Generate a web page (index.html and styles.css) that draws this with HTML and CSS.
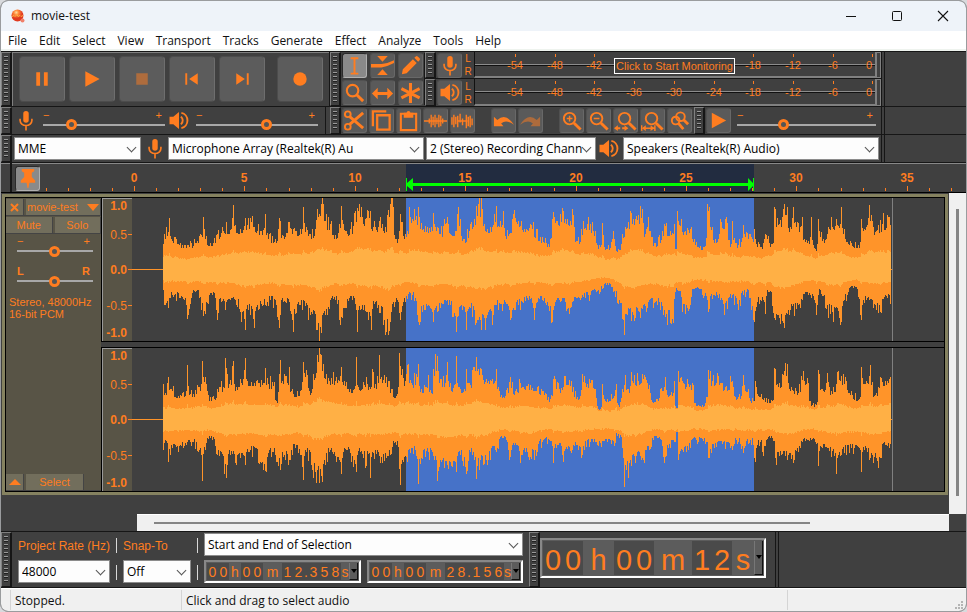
FILE: index.html
```html
<!DOCTYPE html>
<html lang="en">
<head>
<meta charset="utf-8">
<title>movie-test</title>
<link rel="stylesheet" href="styles.css">
</head>
<body>
<svg class="symbols" aria-hidden="true">
  <symbol id="mic" viewBox="0 0 16 22"><rect x="5" y="0" width="6" height="13" rx="3" fill="currentColor"/><path d="M1.500 8.500v2a6.500 5.500 0 0 0 13 0v-2M8 16v5.500" fill="none" stroke="currentColor" stroke-width="1.800"/></symbol>
  <symbol id="speaker" viewBox="0 0 20 20"><path d="M0 6h4l6-5v18l-6-5H0z" fill="currentColor"/><path d="M12 6q4 4 0 8M12.500 2a8.200 8.200 0 0 1 0 16" fill="none" stroke="currentColor" stroke-width="2"/></symbol>
  <symbol id="glass" viewBox="0 0 24 24"><circle cx="9.500" cy="9.500" r="5.500" fill="none" stroke="currentColor" stroke-width="2"/><path d="M13.500 13.500l7 7" stroke="currentColor" stroke-width="3"/></symbol>
</svg>

<div class="window">
  <header class="titlebar">
    <svg class="logo" viewBox="0 0 14 14"><defs><radialGradient id="lg" cx="40%" cy="25%"><stop offset="0" stop-color="#ffe0a0"/><stop offset="0.400" stop-color="#ff8a3a"/><stop offset="1" stop-color="#e03a20"/></radialGradient></defs><circle cx="6.500" cy="6.500" r="6" fill="url(#lg)"/><path d="M1 7.500l2-1 1 1 2-2 1 2 2-1 1 1 2-1" fill="none" stroke="#ffb040" stroke-width="1"/><circle cx="11.500" cy="11.500" r="2" fill="#f0806a"/></svg>
    <h1>movie-test</h1>
    <div class="caption">
      <button aria-label="Minimize"><svg width="12" height="12"><path d="M1 6.500h10" stroke="#111"/></svg></button>
      <button aria-label="Maximize"><svg width="12" height="12"><rect x="1.500" y="1.500" width="9" height="9" rx="1" fill="none" stroke="#111"/></svg></button>
      <button aria-label="Close"><svg width="12" height="12"><path d="M1 1l10 10M11 1L1 11" stroke="#111" stroke-width="1.100"/></svg></button>
    </div>
  </header>
  <nav class="menu">
    <button>File</button><button>Edit</button><button>Select</button><button>View</button><button>Transport</button><button>Tracks</button><button>Generate</button><button>Effect</button><button>Analyze</button><button>Tools</button><button>Help</button>
  </nav>

  <section class="dock">
    <div class="dock-row row-tall">
      <div class="bars">
        <div class="bar transport">
          <i class="grip"></i>
          <div class="big-buttons">
            <button aria-label="Pause"><svg viewBox="0 0 46 46"><path d="M17 16h4v14h-4zM25 16h4v14h-4z"/></svg></button>
            <button aria-label="Play"><svg viewBox="0 0 46 46"><path d="M16 15l15 8-15 8z"/></svg></button>
            <button aria-label="Stop" class="off"><svg viewBox="0 0 46 46"><path d="M17 17h12v12H17z"/></svg></button>
            <button aria-label="Skip to Start"><svg viewBox="0 0 46 46"><path d="M16 17h2v12h-2zM29 17v12l-9-6z"/></svg></button>
            <button aria-label="Skip to End"><svg viewBox="0 0 46 46"><path d="M28 17h2v12h-2zM17 17v12l9-6z"/></svg></button>
            <button aria-label="Record" class="record"><svg viewBox="0 0 46 46"><circle cx="23" cy="23" r="7"/></svg></button>
          </div>
        </div>
        <div class="bar">
          <i class="grip"></i>
          <div class="tool-grid">
            <button class="tool on" aria-label="Selection Tool"><svg viewBox="0 0 24 24"><path d="M8 4.500h8M8 20.500h8M12 4v17" fill="none" stroke="currentColor" stroke-width="2"/></svg></button>
            <button class="tool" aria-label="Envelope Tool"><svg viewBox="0 0 24 24"><path d="M6.500 2h11L12 8zM6.500 22h11L12 16zM0 10.500h11l6-1 7-3v3l-7 3-6 1.500H0z"/></svg></button>
            <button class="tool" aria-label="Draw Tool"><svg viewBox="0 0 24 24"><path d="M3 21l1-5L14.500 5.500l4 4L8 20zM16 4l1.500-1.500q1-1 2 0l2 2q1 1 0 2L20 8z"/></svg></button>
            <button class="tool" aria-label="Zoom Tool"><svg viewBox="0 0 24 24"><circle cx="10" cy="10" r="6" fill="none" stroke="currentColor" stroke-width="2.200"/><path d="M14 14l7 7" stroke="currentColor" stroke-width="3"/></svg></button>
            <button class="tool" aria-label="Time Shift Tool"><svg viewBox="0 0 24 24"><path d="M1 13l6-6v4.500h10V7l6 6-6 6v-4.500H7V19z"/></svg></button>
            <button class="tool" aria-label="Multi-Tool"><svg viewBox="0 0 24 24"><path d="M12 2v21M2.500 8l19 9.500M21.500 8l-19 9.500" fill="none" stroke="currentColor" stroke-width="3.200"/></svg></button>
          </div>
        </div>
        <div class="meters">
          <div class="meter">
            <i class="grip"></i>
            <button class="tool" aria-label="Record Meter"><svg><use href="#mic" x="4" y="2" width="16" height="20"/></svg></button>
            <div class="lr"><span>L</span><span>R</span></div>
            <div class="scale">
              <svg class="meter-scale" data-skip="true"></svg>
              <button class="monitor">Click to Start Monitoring</button>
            </div>
            <i class="clip"></i>
          </div>
          <div class="meter">
            <i class="grip"></i>
            <button class="tool" aria-label="Playback Meter"><svg><use href="#speaker" x="2" y="2" width="20" height="19"/></svg></button>
            <div class="lr"><span>L</span><span>R</span></div>
            <div class="scale"><svg class="meter-scale"></svg></div>
            <i class="clip"></i>
          </div>
        </div>
      </div>
      <i class="dock-end"></i>
    </div>

    <div class="dock-row">
      <div class="bars">
        <div class="bar mixer">
          <i class="grip"></i>
          <svg class="glyph" aria-hidden="true"><use href="#mic" x="3" y="1" width="16" height="20"/></svg>
          <div class="slider"><span><b>−</b><b>+</b></span><input type="range" value="21" aria-label="Recording Volume"></div>
          <svg class="glyph" aria-hidden="true"><use href="#speaker" x="1" y="1" width="20" height="19"/></svg>
          <div class="slider"><span><b>−</b><b>+</b></span><input type="range" value="59" aria-label="Playback Volume"></div>
        </div>
        <div class="bar edit">
          <i class="grip"></i>
          <div class="tools">
            <button class="tool" aria-label="Cut"><svg viewBox="0 0 24 24"><g fill="none" stroke="currentColor" stroke-width="2"><circle cx="5" cy="5.500" r="3"/><circle cx="5" cy="18.500" r="3"/><path d="M7 8l14 12M7 16L21 4" stroke-width="3"/></g></svg></button>
            <button class="tool" aria-label="Copy"><svg viewBox="0 0 24 24"><path d="M3 18V2.500h14M7.500 6.500h13v15h-13z" fill="none" stroke="currentColor" stroke-width="2.400"/></svg></button>
            <button class="tool" aria-label="Paste"><svg viewBox="0 0 24 24"><path d="M4 5h16v17H4z" fill="none" stroke="currentColor" stroke-width="2.200"/><path d="M7 4h3a2 2 0 0 1 4 0h3v5H7z"/></svg></button>
            <button class="tool" aria-label="Trim"><svg viewBox="0 0 24 24"><path d="M0 12.500h24M5.500 10v5M7.500 6v13M9.500 8v9M11.500 6v13M13.500 9v7M15.500 6v13M17.500 7v11M19.500 10v5" fill="none" stroke="currentColor" stroke-width="1.400"/></svg></button>
            <button class="tool" aria-label="Silence"><svg viewBox="0 0 24 24"><path d="M1 8.500v8M3 6v13M5 8v8M7 7v12M7 12.500h10M9.500 5v9M16 6v14M18 8v10M20 7v12M22 10v7M12 10v7" fill="none" stroke="currentColor" stroke-width="1.500"/></svg></button>
            <button class="tool gap" aria-label="Undo"><svg viewBox="0 0 24 24"><path d="M2 18V8l3.500 3.500q9-8 17.500 5-8-6-13.500-1.500L12 18z"/></svg></button>
            <button class="tool off" aria-label="Redo"><svg viewBox="0 0 24 24"><path d="M22 18V8l-3.500 3.500q-9-8-17.500 5 8-6 13.500-1.500L12 18z"/></svg></button>
            <button class="tool gap" aria-label="Zoom In"><svg viewBox="0 0 24 24"><circle cx="10" cy="10" r="6" fill="none" stroke="currentColor" stroke-width="2"/><path d="M14.500 14.500l7 7" stroke="currentColor" stroke-width="3"/><path d="M7 10h6M10 7v6" stroke="currentColor" stroke-width="1.500"/></svg></button>
            <button class="tool" aria-label="Zoom Out"><svg viewBox="0 0 24 24"><circle cx="10" cy="10" r="6" fill="none" stroke="currentColor" stroke-width="2"/><path d="M14.500 14.500l7 7" stroke="currentColor" stroke-width="3"/><path d="M7 10h6" stroke="currentColor" stroke-width="1.500"/></svg></button>
            <button class="tool" aria-label="Fit Selection"><svg viewBox="0 0 24 24"><circle cx="11" cy="10" r="6" fill="none" stroke="currentColor" stroke-width="2"/><path d="M15.500 14.500l7 7" stroke="currentColor" stroke-width="3"/><path d="M0 20l4-3v2h2.500v2H4v2zM15 20l-4-3v2H8.500v2H11v2z"/></svg></button>
            <button class="tool" aria-label="Fit Project"><svg viewBox="0 0 24 24"><circle cx="11" cy="10" r="6" fill="none" stroke="currentColor" stroke-width="2"/><path d="M15.500 14.500l7 7" stroke="currentColor" stroke-width="3"/><path d="M0.700 17v6M14.500 17v6M2 20h12" stroke="currentColor" stroke-width="1.500"/><path d="M1 20l4-3v6zM14 20l-4-3v6z"/></svg></button>
            <button class="tool" aria-label="Zoom Toggle"><svg viewBox="0 0 24 24"><g fill="none" stroke="currentColor" stroke-width="2"><circle cx="13" cy="8" r="4.500"/><circle cx="8" cy="12" r="4"/><path d="M16 11l5 5M11 15l5 6" stroke-width="3"/></g></svg></button>
          </div>
        </div>
        <div class="bar speed">
          <i class="grip"></i>
          <button class="tool" aria-label="Play at Speed"><svg viewBox="0 0 24 24"><path d="M5 4l15 8-15 8z"/></svg></button>
          <div class="slider"><span><b>−</b><b>+</b></span><input type="range" value="32" aria-label="Playback Speed"></div>
        </div>
      </div>
      <i class="dock-end"></i>
    </div>

    <div class="dock-row">
      <div class="bars device">
        <i class="grip"></i>
        <label class="pick host"><select aria-label="Audio Host"><option>MME</option></select></label>
        <svg class="glyph" aria-hidden="true"><use href="#mic" x="4" y="1" width="16" height="20"/></svg>
        <label class="pick"><select aria-label="Recording Device"><option>Microphone Array (Realtek(R) Au</option></select></label>
        <label class="pick chan"><select aria-label="Recording Channels"><option>2 (Stereo) Recording Chann</option></select></label>
        <svg class="glyph" aria-hidden="true"><use href="#speaker" x="1" y="1" width="20" height="19"/></svg>
        <label class="pick"><select aria-label="Playback Device"><option>Speakers (Realtek(R) Audio)</option></select></label>
      </div>
      <i class="dock-end"></i>
    </div>
  </section>

  <section class="timeline">
    <i class="stub"></i>
    <button class="tool on pin" aria-label="Pinned Play Head"><svg viewBox="0 0 24 24"><path d="M6 2h13v2.500L16.500 6v4.500L20 14v2.500h-6L13 22h-1l-1-5.500H5V14l3.500-3.500V6L6 4.500z"/></svg></button>
    <svg id="ruler"></svg>
  </section>

  <main class="project">
    <div class="canvas">
      <article class="track">
        <div class="panel">
          <div class="head"><button class="x" aria-label="Close Track"><svg width="9" height="9"><path d="M1 1l7 7M8 1L1 8" stroke="currentColor" stroke-width="2"/></svg></button><button class="name">movie-test<svg width="12" height="7"><path d="M0 0h12L6 7z"/></svg></button></div>
          <div class="head half"><button>Mute</button><button>Solo</button></div>
          <div class="slider"><span><b>−</b><b>+</b></span><input type="range" value="49" aria-label="Gain"></div>
          <div class="slider pan"><span><b>L</b><b>R</b></span><input type="range" value="49" aria-label="Pan"></div>
          <p>Stereo, 48000Hz<br>16-bit PCM</p>
          <div class="head foot"><button class="x" aria-label="Collapse"><svg width="12" height="6"><path d="M0 6h12L6 0z"/></svg></button><button class="sel">Select</button></div>
        </div>
        <div class="channels">
          <div class="channel"><svg class="amp"></svg><svg class="wave" id="left"></svg></div>
          <div class="divide"></div>
          <div class="channel"><svg class="amp"></svg><svg class="wave" id="right"></svg></div>
        </div>
      </article>
    </div>
    <div class="vscroll"><i></i></div>
    <div class="hscroll"><i></i></div>
  </main>

  <section class="dock lower">
    <i class="grip"></i>
    <div class="selection">
      <label for="rate" class="cap">Project Rate (Hz)</label><i class="rule"></i>
      <label for="snap" class="cap">Snap-To</label><i class="rule"></i>
      <label class="pick wide"><select aria-label="Selection Mode"><option>Start and End of Selection</option></select></label>
      <div class="pick"><select id="rate"><option>48000</option></select></div><i class="rule"></i>
      <div class="pick"><select id="snap"><option>Off</option></select></div><i class="rule"></i>
      <div class="time"><span class="d"><b>0</b><b>0</b></span><span class="u">h</span><span class="d"><b>0</b><b>0</b></span><span class="u m">m</span><span class="d"><b>1</b><b>2</b></span><span class="dot">.</span><span class="d"><b>3</b><b>5</b><b>8</b></span><span class="u s">s</span><button aria-label="Start format"></button></div>
      <div class="time"><span class="d"><b>0</b><b>0</b></span><span class="u">h</span><span class="d"><b>0</b><b>0</b></span><span class="u m">m</span><span class="d"><b>2</b><b>8</b></span><span class="dot">.</span><span class="d"><b>1</b><b>5</b><b>6</b></span><span class="u s">s</span><button aria-label="End format"></button></div>
    </div>
    <i class="grip"></i>
    <div class="time large"><span class="d"><b>0</b><b>0</b></span><span class="u">h</span><span class="d"><b>0</b><b>0</b></span><span class="u m">m</span><span class="d"><b>1</b><b>2</b></span><span class="u s">s</span><button aria-label="Position format"></button></div>
    <i class="dock-end"></i>
  </section>

  <footer class="status">
    <span class="state">Stopped.</span><span class="hint">Click and drag to select audio</span><span class="rest"></span>
    <svg class="sizer" width="9" height="9"><path d="M6 0h2v2H6zM3 3h2v2H3zM6 3h2v2H6zM0 6h2v2H0zM3 6h2v2H3zM6 6h2v2H6z" fill="#b4b4b4"/></svg>
  </footer>
</div>
<script src="script.js"></script>
</body>
</html>
```
FILE: styles.css
```css
:root {
  --orange: #ff7d20;
  --dock: #404040;
  --button: #5a5a5a;
  --line: #161616;
  --panel: #585446;
  --ui: "Open Sans", "Noto Sans", sans-serif;
  --plain: "Liberation Sans", Arial, sans-serif;
}
* { box-sizing: border-box; }
body { margin: 0; background: #d8dadd; font: 12px/16px var(--ui); color: #111; }
button { border: 0; padding: 0; background: none; color: inherit; font: inherit; }
svg { display: block; fill: currentColor; }
i { display: block; }
b { font-weight: inherit; }
.symbols { position: absolute; width: 0; height: 0; }

.window { display: flex; flex-direction: column; height: 100vh; border: 1px solid #9a9c9e; border-radius: 8px; overflow: hidden; background: var(--dock); }
.titlebar { display: flex; align-items: center; height: 30px; padding-left: 10px; background: #eef3f9; flex: none; }
.logo { width: 14px; height: 14px; }
.titlebar h1 { margin: 0 0 0 6px; font: 12px/16px var(--ui); flex: 1; }
.caption { display: flex; }
.caption button { width: 46px; height: 30px; display: grid; place-items: center; }
.menu { display: flex; gap: 12px; height: 20px; padding: 2px 7px 0; background: #fff; border-bottom: 2px solid #eef3ee; flex: none; }

.dock { border-top: 1px solid var(--line); color: var(--orange); flex: none; }
.dock-row { display: flex; height: 28px; border-bottom: 1px solid var(--line); }
.row-tall { height: 55px; }
.bars { display: flex; flex: 0 1 880px; min-width: 0; }
.bar { display: flex; align-items: center; flex: none; }
.dock-end { width: 4px; border: solid var(--line); border-width: 0 1px; flex: none; }
.grip { width: 11px; flex: none; align-self: stretch; border: 1px solid #808080; border-right: 2px solid var(--line); border-bottom-color: var(--line); padding: 3px 2px; background: repeating-linear-gradient(#9a9a9a 0 1px, #202020 1px 2px, transparent 2px 4px) content-box; }

.transport { border-right: 1px solid var(--line); width: 329px; }
.big-buttons { display: flex; gap: 4px; padding: 3px 0 3px 6px; flex: 1; border-left: 1px solid #808080; border-top: 1px solid #808080; align-self: stretch; }
.big-buttons button { width: 46px; height: 46px; background: #5c5c5c; border: 1px solid #4c4c4c; border-right-color: #6e6e6e; border-radius: 4px; }
.big-buttons svg { width: 44px; height: 44px; }
.big-buttons .record { margin-left: 8px; }
.off svg { opacity: 0.5; }
.tool { width: 25px; height: 25px; background: var(--button); border: 1px solid #686868; border-top-color: #505050; border-left-color: #505050; border-radius: 3px; overflow: hidden; flex: none; }
.tool svg { width: 23px; height: 23px; }
.tool.on { background: #8a8a8a; border-color: #2a2a2a #b0b0b0 #b0b0b0 #2a2a2a; }
.tool-grid { display: grid; grid-template-columns: repeat(3, 25px); gap: 2px 3px; padding: 0 1px; border-right: 1px solid var(--line); }
.meters { flex: 1; min-width: 0; display: grid; grid-template-rows: 27px 27px; }
.meter { display: flex; align-items: center; border-bottom: 1px solid var(--line); min-width: 0; }
.meter:last-child { border: 0; }
.meter .tool { margin-left: 1px; }
.lr { display: flex; flex-direction: column; width: 12px; font: 10px/13px var(--plain); text-align: center; }
.scale { position: relative; flex: 1; min-width: 0; align-self: stretch; border: solid #808080; border-width: 0 1px 2px; border-left-color: #111; }
.meter-scale { width: 100%; height: 100%; font: 11px var(--plain); overflow: hidden; }
.monitor { position: absolute; left: 139px; top: 6px; width: 121px; height: 16px; border: 1px solid #fff; background: var(--dock); font: 11px/13px var(--plain); white-space: nowrap; }
.clip { width: 5px; align-self: stretch; border: 1px solid #808080; }

.mixer { width: 325px; margin-right: 4px; border-right: 1px solid var(--line); gap: 6px; }
.glyph { width: 22px; height: 22px; flex: none; }
.mixer .glyph { margin-left: -3px; }
.slider { flex: 1; min-width: 0; display: flex; flex-direction: column; }
.slider span { display: flex; justify-content: space-between; font: 11px/8px var(--plain); padding-right: 3px; }
.slider input { appearance: none; margin: 0; width: 100%; height: 12px; background: linear-gradient(#a8a8a8, #a8a8a8) center / 100% 2px no-repeat; }
.slider input::-webkit-slider-thumb { appearance: none; width: 11px; height: 11px; border-radius: 50%; border: 3px solid var(--orange); background: #555; }
.mixer .slider { flex: 0 1 122px; }
.tools { display: flex; gap: 2px; padding-left: 1px; }
.tools .gap { margin-left: 14px; }
.edit { width: 364px; }
.speed { flex: 1; gap: 1px; padding-right: 5px; }
.speed .slider { margin-left: 5px; }
.device { align-items: center; gap: 2px; padding-right: 2px; }
.pick { position: relative; display: block; flex: 1; min-width: 0; height: 23px; border: 1px solid #8c8c8c; background: #fdfdfd; color: #000; }
.pick::after { content: ""; position: absolute; right: 5px; top: 6px; width: 6px; height: 6px; border: solid #555; border-width: 0 1px 1px 0; transform: rotate(45deg); pointer-events: none; }
.pick select { appearance: none; width: 100%; height: 100%; border: 0; background: none; padding: 1px 12px 0 3px; font: 12px/20px var(--ui); color: #000; }
.host { flex: 0 1 127px; }
.chan { flex: 0 1 170px; }
.device .glyph { margin-right: 1px; }

.timeline { display: flex; height: 30px; border-bottom: 1px solid #000; box-shadow: inset 0 1px #888; color: var(--orange); flex: none; }
.stub { width: 11px; border-right: 2px solid var(--line); margin-right: 3px; flex: none; }
.pin { margin-top: 3px; }
#ruler { flex: 1; min-width: 0; height: 29px; font: bold 12px var(--plain); overflow: hidden; }

.project { flex: 1; min-height: 0; display: grid; grid-template: 1fr 17px / 1fr 17px; color: var(--orange); }
.canvas { min-width: 0; overflow: hidden; padding: 1px 0 0 1px; }
.track { display: flex; margin-right: 1px; border: 3px solid #858260; outline: 1px solid #000; outline-offset: -4px; padding: 1px; }
.panel { width: 95px; background: var(--panel); display: flex; flex-direction: column; font: 11px/12px var(--plain); flex: none; }
.head { display: flex; gap: 2px; margin-top: 1px; height: 17px; border-bottom: 1px solid #444; }
.head button { background: #726e5c; border: solid #444; border-width: 0 1px 0 0; height: 16px; color: var(--orange); }
.head .x { width: 18px; display: grid; place-items: center; }
.head .name { flex: 1; display: flex; justify-content: space-between; align-items: center; padding: 0 1px; }
.half button { flex: 1; }
.panel .slider { flex: none; padding: 0 8px 0 11px; margin-top: 3px; }
.panel .pan { margin-top: 10px; }
.pan span { font-weight: bold; }
.panel p { margin: 9px 3px; white-space: nowrap; }
.foot { margin-top: auto; }
.foot .sel { width: 58px; }
.channels { flex: 1; min-width: 0; }
.channel { display: flex; height: 143px; }
.divide { height: 7px; background: #404040; border: solid #000; border-width: 1px 0; }
.amp { width: 31px; height: 143px; border-left: 1px solid #000; background: var(--panel); box-shadow: inset 1px 1px #999; font: 12px var(--plain); flex: none; }
.wave { flex: 1; min-width: 0; height: 143px; background: #404040; overflow: hidden; }
.vscroll, .hscroll { background: #f0f0f0; }
.vscroll { padding: 16px 7px 18px; }
.vscroll i { height: 100%; background: #858585; }
.hscroll { margin-left: 136px; padding: 7px 139px 7px 17px; border-top: 1px solid #fff; }
.hscroll i { height: 2px; background: #858585; }

.lower { display: flex; height: 57px; border-bottom: 1px solid var(--line); }
.selection { display: grid; grid-template: 23px 23px / 92px 1px 68px 1px 157px 156px; gap: 4px 6px; padding: 1px 6px 0; }
.selection .wide { grid-column: span 2; }
.cap { font: 12px/26px var(--plain); white-space: nowrap; }
.rule { background: #d8d8d8; margin: 5px 0 3px; }
.time { display: flex; border: 2px solid #fff; border-top-color: #888; border-left-color: #888; background: #5c5c5c; padding: 1px; font: 14px/18px var(--plain); text-align: center; min-width: 0; }
.time .d { display: flex; background: #4a4a4a; }
.time .d b { width: 11px; }
.time .u { width: 12px; }
.time .m { width: 19px; }
.time .dot { width: 4px; background: #4a4a4a; }
.time .s { flex: 1; }
.time button { width: 9px; border: solid #111; border-width: 0 1px 1px 0; border-left: 1px solid #777; display: grid; place-items: center; }
.time button::after { content: ""; border: solid transparent; border-width: 4px 3px 0; border-top-color: #000; }
.large { align-self: center; width: 226px; height: 40px; font: 29px/38px var(--plain); margin: 0 9px 4px 0; }
.large span { height: 34px; }
.large .d b { width: 20px; }
.large .u { width: 31px; }
.large .m { width: 38px; }

.status { display: flex; align-items: center; height: 23px; background: #f0f0f0; border-top: 1px solid #fff; padding-left: 9px; flex: none; line-height: 22px; }
.status span { border-left: 1px solid #d4d4d4; padding-left: 4px; height: 20px; }
.state { width: 171px; }
.hint { width: 606px; }
.rest { flex: 1; }
.sizer { align-self: flex-end; margin: 0 2px 1px 0; }
```
FILE: script.js
```js
const NS = "http://www.w3.org/2000/svg";
const ORANGE = "#ff7d20";

function add(svg, tag, attrs, text) {
  const el = document.createElementNS(NS, tag);
  for (const key in attrs) el.setAttribute(key, attrs[key]);
  if (text !== undefined) el.textContent = text;
  svg.appendChild(el);
}

// Level meters: one mark every 6 dB, left out beneath the monitoring button.
document.querySelectorAll(".meter-scale").forEach(svg => {
  add(svg, "rect", { x: 0, y: 12, width: "100%", height: 1, fill: "#8c8c8c" });
  add(svg, "rect", { x: 0, y: 13, width: "100%", height: 1, fill: "#111" });
  for (let i = 0; i < 10; i++) {
    const db = -54 + i * 6;
    const x = Math.round(40 + i * 39.7);
    if (svg.dataset.skip && db >= -36 && db <= -24) continue;
    add(svg, "rect", { x, y: 2, width: 1, height: 3, fill: ORANGE });
    add(svg, "text", { x: db === 0 ? x - 3 : x, y: 17, "text-anchor": "middle" }, db);
  }
});

// Timeline, 22.08 pixels to the second.
const SECOND = 22.08;
const ruler = document.getElementById("ruler");
const ORIGIN = 94;
add(ruler, "rect", { x: 366, y: 1, width: 348, height: 28, fill: "#222c40" });
for (let s = -4; s < 38; s++) {
  const x = Math.round(ORIGIN + s * SECOND);
  const major = s >= 0 && s % 5 === 0;
  add(ruler, "rect", { x, y: major ? 23 : 25, width: 1, height: major ? 5 : 3, fill: ORANGE });
  if (major) add(ruler, "text", { x, y: 19, "text-anchor": "middle" }, s);
}
add(ruler, "path", { d: "M366 15h1v5l6-5v5h335v-5l5 5v-5h1v13h-1v-5l-5 5v-5H373v5l-6-5v5h-1z", fill: "#00ff00" });

document.querySelectorAll(".amp").forEach(svg => {
  [["1.0", 12, 1], ["0.5", 41, 0], ["0.0", 76, 1], ["-0.5", 112, 0], ["-1.0", 139, 1]].forEach(([label, y, bold]) => {
    add(svg, "text", { x: 25, y, "text-anchor": "end", "font-weight": bold ? "bold" : "normal" }, label);
  });
  [36, 71, 107].forEach(y => add(svg, "rect", { x: 26, y, width: 4, height: 1 }));
});

// Peaks as x, height pairs; x is the column of the project window.
const PEAKS = {
  left: {
    up: "163 25 164 35 169 51 171 30 175 32 182 24 188 24 197 28 201 34 203 52 204 40 210 26 213 26 216 34 222 42 231 40 233 64 235 44 240 40 245 51 247 44 252 53 254 42 260 38 265 55 267 36 275 30 278 40 280 48 282 34 288 47 292 35 296 38 300 40 303 62 306 42 310 35 315 40 317 60 321 65 323 65 325 48 330 45 335 34 339 45 341 63 343 45 345 38 350 40 355 58 360 52 365 50 368 58 370 58 373 42 375 42 380 52 385 42 390 65 393 62 396 30 400 55 405 35 407 38 409 62 412 50 414 60 418 50 418 62 421 46 427 42 431 42 433 56 436 38 440 35 444 50 448 45 455 38 457 55 460 50 464 30 470 45 474 50 476 63 482 60 484 45 490 42 494 55 500 48 503 58 508 33 512 50 518 48 521 48 524 40 532 40 540 32 548 25 552 50 557 48 563 58 567 50 573 54 577 28 583 48 590 45 595 38 600 22 602 46 607 20 613 38 618 20 622 35 625 42 631 56 635 50 642 60 645 35 648 52 651 32 655 26 662 38 670 38 674 45 676 20 677 58 681 50 685 38 691 42 697 22 704 22 707 65 709 62 712 42 715 30 720 50 727 46 731 25 732 48 735 26 738 24 743 44 749 35 752 30 754 40 761 22 765 35 772 25 774 62 779 45 784 65 787 62 790 42 793 62 796 42 802 52 804 30 808 28 811 52 815 20 818 50 823 30 828 42 831 52 837 44 841 62 844 40 850 28 858 24 861 50 866 42 869 64 872 48 876 38 882 45 888 52 890 44 891 38",
    down: "163 20 164 35 168 38 172 25 180 28 188 45 190 34 195 22 203 46 208 34 212 25 217 50 221 32 225 40 235 30 240 42 245 60 248 40 254 58 258 40 263 35 270 30 279 58 283 32 285 32 293 62 297 34 300 35 310 45 317 60 321 63 325 45 327 45 335 30 340 55 345 38 352 30 357 62 360 40 363 40 371 60 374 34 377 38 386 62 390 52 395 32 400 50 405 32 412 25 418 52 425 40 433 52 440 38 448 35 456 62 462 40 466 60 470 38 475 55 480 50 485 60 493 45 500 34 510 50 518 35 528 30 534 50 542 30 552 52 560 32 570 38 580 30 590 25 600 22 606 15 613 22 618 34 624 65 627 45 632 42 640 48 647 38 655 32 663 45 673 53 677 20 682 42 690 35 695 18 702 25 708 42 714 25 724 45 731 28 738 40 746 22 751 40 754 52 760 30 765 44 768 22 774 48 783 53 790 40 800 38 808 25 816 45 820 20 825 38 832 42 841 52 847 25 853 18 861 50 866 30 873 38 880 42 887 28 891 32"
  },
  right: {
    up: "163 35 165 26 168 42 172 28 180 24 186 28 187 54 190 25 198 32 201 35 202 58 205 42 207 28 211 18 217 30 223 32 225 61 227 45 229 35 233 58 236 32 240 40 243 40 245 61 247 38 256 38 263 36 265 51 268 35 274 37 276 18 279 45 280 59 282 38 287 36 289 52 291 28 293 25 300 28 303 57 307 44 309 28 313 45 317 64 320 65 323 55 326 45 329 38 336 42 341 52 344 38 348 30 354 30 356 62 358 32 364 34 366 42 369 32 372 50 375 35 378 36 379 64 381 42 386 42 392 30 396 23 399 66 402 50 405 38 408 55 411 36 418 55 421 30 425 32 428 44 431 26 433 50 437 63 440 40 445 36 447 57 450 36 453 31 456 63 459 32 464 30 466 50 470 34 473 52 476 62 481 50 486 40 492 40 496 50 499 28 503 22 510 42 515 28 520 36 530 34 537 32 545 26 550 20 553 40 559 30 564 43 571 38 577 22 582 45 590 36 595 30 600 10 602 35 607 20 616 35 618 14 622 30 625 44 628 30 631 47 638 38 642 45 649 34 655 17 660 30 665 42 670 24 674 38 676 11 677 11 678 48 682 38 690 34 693 34 695 16 702 14 706 22 708 49 712 38 718 43 725 32 732 38 738 22 743 44 748 30 753 18 755 38 761 25 772 18 774 51 779 36 784 48 787 55 791 32 796 28 803 48 808 36 809 18 816 14 818 49 822 30 827 46 831 28 838 48 846 38 851 28 859 20 861 52 866 38 870 54 875 24 880 42 885 38 890 42 891 30",
    down: "163 30 165 20 168 42 172 28 178 32 186 25 192 22 198 32 201 35 202 61 205 30 210 18 217 35 226 58 230 35 236 45 240 38 245 45 250 30 260 42 266 52 272 32 280 50 284 35 288 45 295 28 301 35 303 60 306 32 312 50 317 50 322 62 325 45 329 32 336 42 341 54 347 30 351 42 356 52 360 32 366 46 368 34 370 58 373 33 380 43 386 38 390 35 395 22 400 65 403 42 407 42 412 28 416 36 418 64 421 38 428 32 434 40 437 61 440 40 444 48 452 47 456 52 460 35 466 54 470 32 474 40 476 59 480 40 488 40 497 28 503 18 509 40 514 25 520 43 527 32 536 36 542 22 549 20 553 43 557 25 562 35 572 30 576 25 581 38 590 22 601 27 607 22 614 26 618 14 622 28 624 67 626 50 631 46 636 36 643 40 649 30 657 18 664 43 668 28 675 22 676 12 677 12 678 40 688 30 696 20 706 22 708 38 714 28 722 24 732 30 736 20 743 33 750 20 755 42 760 22 763 36 772 18 775 38 785 36 793 43 798 32 808 20 816 24 818 46 822 28 834 36 836 54 840 36 851 28 859 28 861 52 864 30 870 38 880 38 885 25 891 30"
  }
};

let seed = 7;
const random = () => (seed = (seed * 16807) % 2147483647) / 2147483647;

function heights(text) {
  const n = text.split(" ").map(Number);
  const out = [];
  for (let i = 0; i + 3 < n.length; i += 2) {
    const [x0, a, x1, b] = n.slice(i, i + 4);
    for (let x = x0; x < x1; x++) {
      const t = (x - x0) / (x1 - x0);
      const near = a > b ? 1 - t : t;
      const base = Math.min(a, b) + Math.abs(a - b) * near ** 3;
      out.push(x === x0 ? a : Math.round(base * (0.86 + 0.4 * random() ** 3)));
    }
  }
  return out;
}

function area(up, down, mid) {
  let d = `M31 ${mid}`;
  up.forEach((h, i) => { d += `V${mid - h}h1`; });
  for (let i = down.length - 1; i >= 0; i--) d += `V${mid + 1 + down[i]}h-1`;
  return d + "z";
}

function loudness(list) {
  return list.map((h, i) => {
    let sum = 0, count = 0;
    for (let j = Math.max(0, i - 12); j <= Math.min(list.length - 1, i + 12); j++) { sum += list[j]; count++; }
    return Math.round(Math.min(h - 1, sum / count * 0.25 + h * 0.13 + random() * 1.5));
  });
}

for (const id in PEAKS) {
  const svg = document.getElementById(id);
  const up = heights(PEAKS[id].up);
  const down = heights(PEAKS[id].down);
  add(svg, "rect", { x: 274, y: 0, width: 348, height: 143, fill: "#4672c8" });
  add(svg, "rect", { x: 0, y: 71, width: 760, height: 1, fill: "#ff9429" });
  add(svg, "path", { d: area(up, down, 71), fill: "#ff9429" });
  add(svg, "path", { d: area(loudness(up), loudness(down), 71), fill: "#ffb045" });
  add(svg, "rect", { x: 760, y: 0, width: 1, height: 143, fill: "#808080" });
}
```
